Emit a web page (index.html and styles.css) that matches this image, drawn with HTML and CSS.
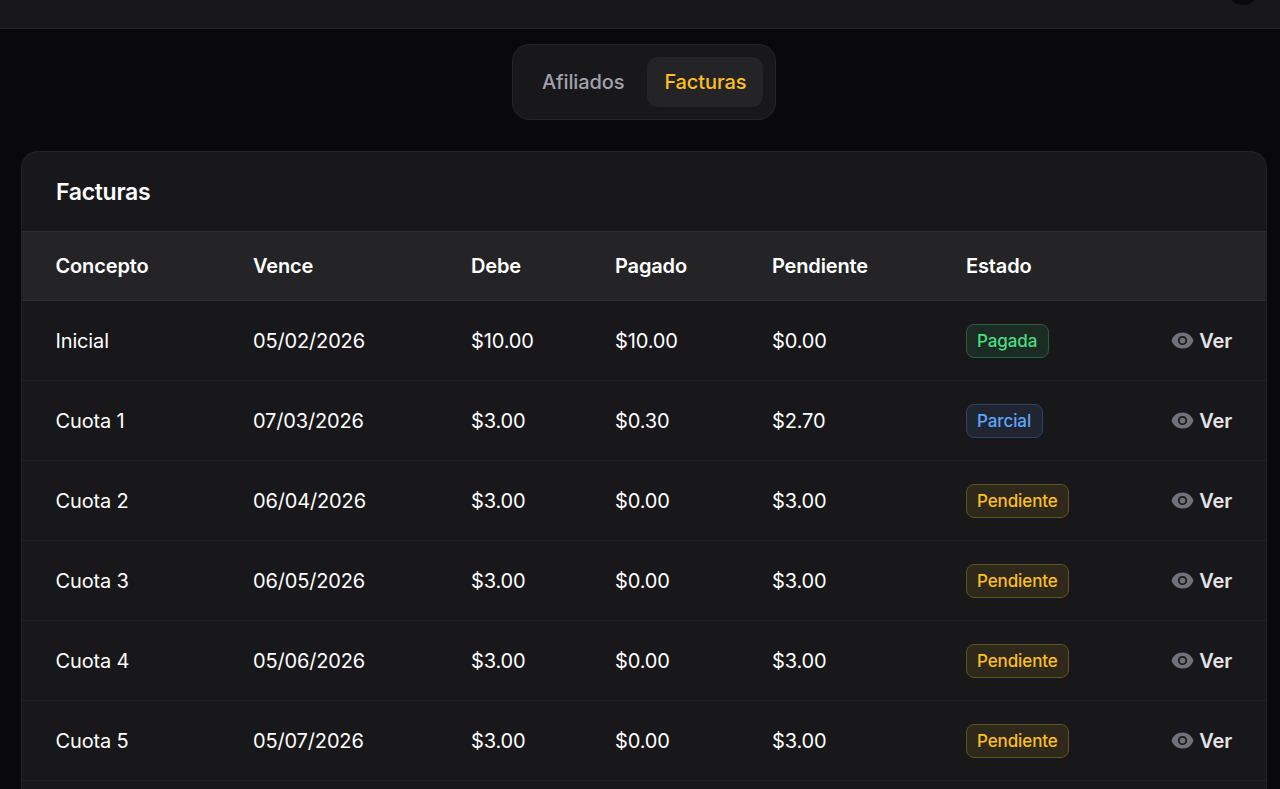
FILE: index.html
```html
<!DOCTYPE html>
<html lang="es">
<head>
    <meta charset="UTF-8">
    <meta name="viewport" content="width=device-width, initial-scale=1.0">
    <title>Facturas</title>
    <link rel="stylesheet" href="styles.css">
</head>
<body>
    <!-- Eye icon shared by all the rows -->
    <svg class="sprite" aria-hidden="true">
        <symbol id="eye" viewBox="0 0 20 20">
            <path d="M10 12.5a2.5 2.5 0 1 0 0-5 2.5 2.5 0 0 0 0 5Z"/>
            <path fill-rule="evenodd" clip-rule="evenodd" d="M.664 10.59a1.651 1.651 0 0 1 0-1.186A10.004 10.004 0 0 1 10 3c4.257 0 7.893 2.66 9.336 6.41.147.381.146.804 0 1.186A10.004 10.004 0 0 1 10 17c-4.257 0-7.893-2.66-9.336-6.41ZM14 10a4 4 0 1 1-8 0 4 4 0 0 1 8 0Z"/>
        </symbol>
    </svg>

    <header class="topbar">
        <span class="avatar"></span>
    </header>

    <main class="content">
        <nav class="tabs">
            <button class="tab">Afiliados</button>
            <button class="tab active">Facturas</button>
        </nav>

        <section class="card">
            <h2 class="card-title">Facturas</h2>
            <table class="table">
                <colgroup>
                    <col class="col-concepto">
                    <col class="col-vence">
                    <col class="col-debe">
                    <col class="col-pagado">
                    <col class="col-pendiente">
                    <col class="col-estado">
                    <col>
                </colgroup>
                <thead>
                    <tr>
                        <th>Concepto</th>
                        <th>Vence</th>
                        <th>Debe</th>
                        <th>Pagado</th>
                        <th>Pendiente</th>
                        <th>Estado</th>
                        <th></th>
                    </tr>
                </thead>
                <tbody>
                    <tr>
                        <td>Inicial</td>
                        <td>05/02/2026</td>
                        <td>$10.00</td>
                        <td>$10.00</td>
                        <td>$0.00</td>
                        <td><span class="badge success">Pagada</span></td>
                        <td><a class="link"><svg class="icon"><use href="#eye"/></svg>Ver</a></td>
                    </tr>
                    <tr>
                        <td>Cuota 1</td>
                        <td>07/03/2026</td>
                        <td>$3.00</td>
                        <td>$0.30</td>
                        <td>$2.70</td>
                        <td><span class="badge info">Parcial</span></td>
                        <td><a class="link"><svg class="icon"><use href="#eye"/></svg>Ver</a></td>
                    </tr>
                    <tr>
                        <td>Cuota 2</td>
                        <td>06/04/2026</td>
                        <td>$3.00</td>
                        <td>$0.00</td>
                        <td>$3.00</td>
                        <td><span class="badge warning">Pendiente</span></td>
                        <td><a class="link"><svg class="icon"><use href="#eye"/></svg>Ver</a></td>
                    </tr>
                    <tr>
                        <td>Cuota 3</td>
                        <td>06/05/2026</td>
                        <td>$3.00</td>
                        <td>$0.00</td>
                        <td>$3.00</td>
                        <td><span class="badge warning">Pendiente</span></td>
                        <td><a class="link"><svg class="icon"><use href="#eye"/></svg>Ver</a></td>
                    </tr>
                    <tr>
                        <td>Cuota 4</td>
                        <td>05/06/2026</td>
                        <td>$3.00</td>
                        <td>$0.00</td>
                        <td>$3.00</td>
                        <td><span class="badge warning">Pendiente</span></td>
                        <td><a class="link"><svg class="icon"><use href="#eye"/></svg>Ver</a></td>
                    </tr>
                    <tr>
                        <td>Cuota 5</td>
                        <td>05/07/2026</td>
                        <td>$3.00</td>
                        <td>$0.00</td>
                        <td>$3.00</td>
                        <td><span class="badge warning">Pendiente</span></td>
                        <td><a class="link"><svg class="icon"><use href="#eye"/></svg>Ver</a></td>
                    </tr>
                </tbody>
            </table>
        </section>
    </main>
</body>
</html>
```
FILE: styles.css
```css
* {
    box-sizing: border-box;
}

body {
    margin: 0;
    height: 789px;
    overflow: hidden;
    background-color: #09090b;
    color: #fff;
    font-family: Inter, sans-serif;
    font-size: 20px;
    line-height: 28px;
    letter-spacing: -0.15px;
}

.sprite {
    display: none;
}

/* Top bar */
.topbar {
    display: flex;
    justify-content: flex-end;
    height: 29px;
    padding-right: 20px;
    background-color: #18181b;
    border-bottom: 1px solid #242427;
}

.avatar {
    width: 34px;
    height: 34px;
    margin-top: -29px;
    border-radius: 50%;
    background-color: #09090b;
}

.content {
    padding: 15px 13px 0 21px;
}

/* Tabs */
.tabs {
    display: flex;
    gap: 6px;
    width: 264px;
    height: 76px;
    margin: 0 auto 31px;
    padding: 12px;
    background-color: #18181b;
    border: 1px solid #242427;
    border-radius: 17px;
}

.tab {
    height: 50px;
    padding: 0 17px;
    border: none;
    border-radius: 11px;
    background: none;
    color: #a1a1aa;
    font: inherit;
    font-weight: 500;
    letter-spacing: -0.12px;
}

.tab.active {
    background-color: #242427;
    color: #fbbf24;
}

/* Invoices card */
.card {
    height: 638px;
    overflow: hidden;
    background-color: #18181b;
    border: 1px solid #242427;
    border-bottom: none;
    border-radius: 17px 17px 0 0;
}

.card-title {
    margin: 0;
    padding: 23px 34px 21px;
    height: 79px;
    font-size: 23px;
    line-height: 35px;
    font-weight: 600;
    letter-spacing: -0.3px;
}

.table {
    width: 100%;
    table-layout: fixed;
    border-collapse: separate;
    border-spacing: 0;
}

.col-concepto { width: 214px; }
.col-vence { width: 218px; }
.col-debe { width: 144px; }
.col-pagado { width: 157px; }
.col-pendiente { width: 194px; }
.col-estado { width: 160px; }

th {
    height: 70px;
    padding: 0 0 0 17px;
    background-color: #242427;
    border-top: 1px solid #2d2d30;
    border-bottom: 1px solid #2d2d30;
    text-align: left;
    font-weight: 600;
}

td {
    height: 80px;
    padding: 0 0 0 17px;
    border-bottom: 1px solid #232326;
}

th:first-child,
td:first-child {
    padding-left: 33.5px;
}

td:last-child {
    padding: 0 34px 0 0;
}

/* Status badges */
.badge {
    display: block;
    width: max-content;
    height: 34px;
    margin-left: -0.5px;
    padding: 0 10.5px;
    border: 1px solid;
    border-radius: 8px;
    font-size: 17px;
    line-height: 32px;
    font-weight: 500;
    letter-spacing: -0.1px;
}

.success {
    color: #4ade80;
    background-color: #1d2b25;
    border-color: #285f3e;
}

.info {
    color: #60a5fa;
    background-color: #1f2631;
    border-color: #2b4467;
}

.warning {
    color: #fbbf24;
    background-color: #2f291c;
    border-color: #65501e;
}

/* Row action */
.link {
    display: flex;
    justify-content: flex-end;
    align-items: center;
    gap: 5.5px;
    color: #e4e4e7;
    font-weight: 600;
}

.icon {
    width: 23px;
    height: 23px;
    fill: #71717a;
}
```
